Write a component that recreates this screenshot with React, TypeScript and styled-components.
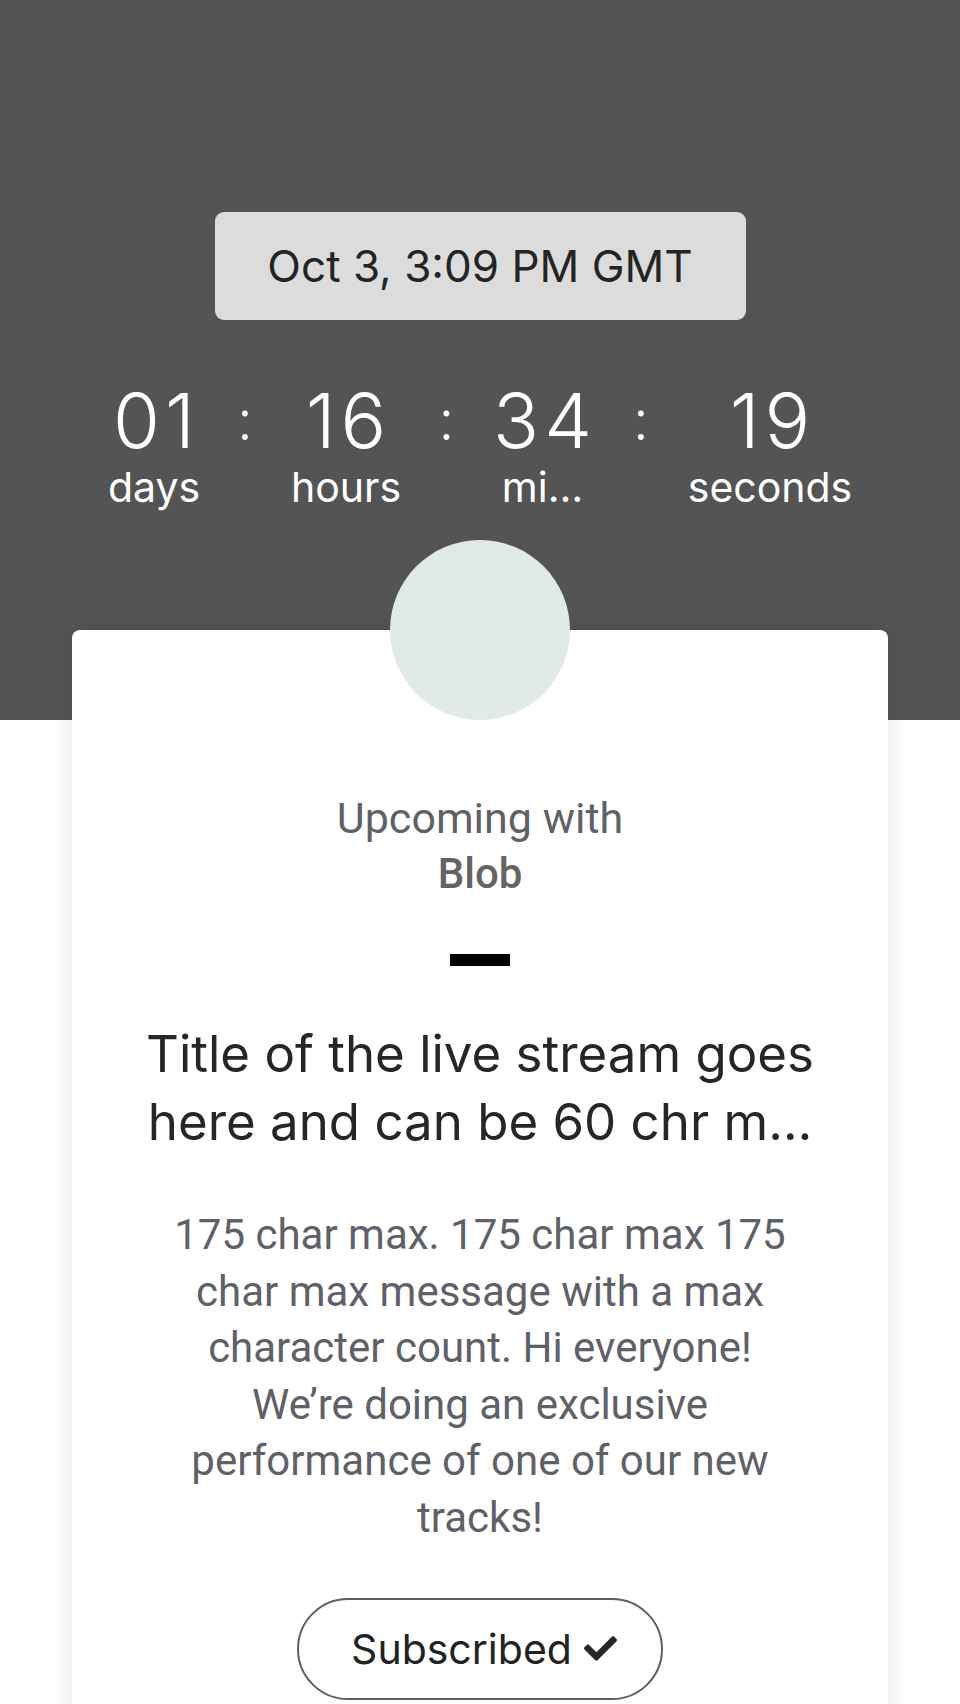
import styled, { createGlobalStyle } from 'styled-components';
import { FaCheck } from 'react-icons/fa';

const GlobalStyle = createGlobalStyle`
  * {
    box-sizing: border-box;
  }

  body {
    margin: 0;
    background: #ffffff;
    font-family: Inter, "Noto Sans", sans-serif;
  }
`;

const Page = styled.div`
  width: 960px;
  min-height: 1704px;
  overflow: hidden;
`;

const Hero = styled.header`
  height: 720px;
  background: #545454;
  padding-top: 212px;
  display: flex;
  flex-direction: column;
  align-items: center;
`;

const DatePill = styled.div`
  width: 531px;
  height: 108px;
  border-radius: 9px;
  background: #dcdcdc;
  color: #242424;
  font-size: 44px;
  display: flex;
  align-items: center;
  justify-content: center;
`;

const Countdown = styled.div`
  margin-top: 62px;
  display: flex;
  align-items: flex-start;
  color: #ffffff;
`;

const Unit = styled.div<{ $width: number }>`
  width: ${(p) => p.$width}px;
  display: flex;
  flex-direction: column;
  align-items: center;
`;

const Value = styled.span`
  font-size: 76px;
  font-weight: 300;
  line-height: 76px;
  letter-spacing: 5px;
  padding-left: 5px;
`;

const Label = styled.span`
  font-size: 41px;
  line-height: 48px;
  margin-top: 5px;
  white-space: nowrap;
`;

const Colon = styled.span<{ $width: number }>`
  width: ${(p) => p.$width}px;
  text-align: center;
  font-size: 56px;
  font-weight: 300;
  line-height: 76px;
`;

const Card = styled.main`
  width: 816px;
  margin: -90px auto 0;
  background: #ffffff;
  border-radius: 8px 8px 0 0;
  box-shadow: 0 0 24px rgba(0, 0, 0, 0.1);
  min-height: 1100px;
  display: flex;
  flex-direction: column;
  align-items: center;
  text-align: center;
`;

const Avatar = styled.div`
  width: 180px;
  height: 180px;
  margin-top: -90px;
  border-radius: 50%;
  background: #e0ebe7;
`;

const Upcoming = styled.p`
  margin: 71px 0 0;
  font-family: Roboto, sans-serif;
  font-size: 43px;
  line-height: 55px;
  color: #5f6167;
`;

const Host = styled.p`
  margin: 0;
  font-family: Roboto, sans-serif;
  font-size: 42px;
  font-weight: 500;
  line-height: 55px;
  color: #646464;
`;

const Divider = styled.div`
  width: 60px;
  height: 12px;
  margin-top: 53px;
  background: #000000;
`;

const Title = styled.h1`
  margin: 54px 0 0;
  max-width: 690px;
  font-size: 51px;
  font-weight: 400;
  line-height: 68px;
  color: #262626;
`;

const Description = styled.p`
  margin: 51px 0 0;
  max-width: 650px;
  font-family: Roboto, sans-serif;
  font-size: 42px;
  line-height: 56.6px;
  color: #5f6068;
`;

const SubscribeButton = styled.button`
  margin-top: 51px;
  width: 366px;
  height: 102px;
  border: 2px solid #5e5e62;
  border-radius: 51px;
  background: #ffffff;
  color: #222222;
  font-family: Inter, sans-serif;
  font-size: 41px;
  display: flex;
  align-items: center;
  justify-content: center;
  gap: 12px;
  padding: 0 0 0 8px;

  svg {
    color: #262626;
  }
`;

const units = [
  { value: '01', label: 'days', width: 89, sep: 93 },
  { value: '16', label: 'hours', width: 109, sep: 92 },
  { value: '34', label: 'mi…', width: 100, sep: 97 },
  { value: '19', label: 'seconds', width: 161, sep: 0 },
];

export default function App() {
  return (
    <Page>
      <GlobalStyle />
      <Hero>
        <DatePill>Oct 3, 3:09 PM GMT</DatePill>
        <Countdown>
          {units.map((u) => (
            <>
              <Unit key={u.label} $width={u.width}>
                <Value>{u.value}</Value>
                <Label>{u.label}</Label>
              </Unit>
              {u.sep > 0 && <Colon $width={u.sep}>:</Colon>}
            </>
          ))}
        </Countdown>
      </Hero>
      <Card>
        <Avatar />
        <Upcoming>Upcoming with</Upcoming>
        <Host>Blob</Host>
        <Divider />
        <Title>Title of the live stream goes here and can be 60 chr m…</Title>
        <Description>
          175 char max. 175 char max 175 char max message with a max character count. Hi everyone!
          We’re doing an exclusive performance of one of our new tracks!
        </Description>
        <SubscribeButton>
          Subscribed
          <FaCheck size={33} />
        </SubscribeButton>
      </Card>
    </Page>
  );
}
